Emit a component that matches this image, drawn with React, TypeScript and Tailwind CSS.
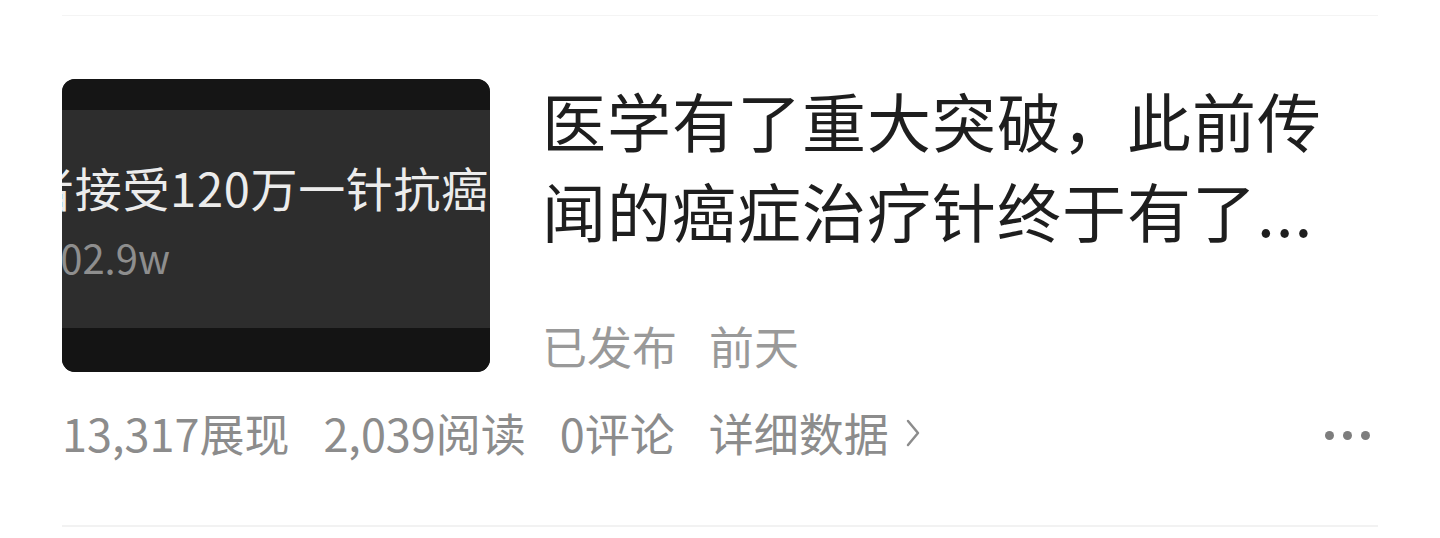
import React from 'react';

const cjk = { fontFamily: '"Noto Sans CJK SC", "Noto Sans", sans-serif' };

const Thumbnail: React.FC = () => (
  <div className="flex h-[293px] w-[428px] shrink-0 flex-col overflow-hidden rounded-[13px] bg-[#2d2d2d]">
    <div className="h-[31px] bg-[#151515]" />
    <div className="flex flex-1 flex-col overflow-hidden">
      <div className="mt-[50px] ml-[-35px] whitespace-nowrap text-[47px] leading-[54px] tracking-[0.7px] text-[#ececec]">
        者接受120万一针抗癌
      </div>
      <div className="mt-[20px] ml-[-24px] whitespace-nowrap text-[40px] leading-[46px] text-[#8e8e8e]">
        102.9w
      </div>
    </div>
    <div className="h-[44px] bg-[#141414]" />
  </div>
);

const App: React.FC = () => {
  const stats = ['13,317展现', '2,039阅读', '0评论'];

  return (
    <div className="h-[538px] w-[1440px] overflow-hidden bg-white px-[62px] pt-[15px]" style={cjk}>
      <div className="border-t border-[#f4f4f4]" />

      <div className="mt-[63px] flex">
        <Thumbnail />
        <div className="ml-[52px] flex flex-col">
          <h1 className="-mt-[5px] w-[820px] text-[64px] font-normal leading-[90px] tracking-[1px] text-[#1e1e1e]">
            医学有了重大突破，此前传
            <br />
            闻的癌症治疗针终于有了...
          </h1>
          <div className="mt-[67px] flex gap-[32px] text-[45px] leading-[50px] text-[#999999]">
            <span>已发布</span>
            <span>前天</span>
          </div>
        </div>
      </div>

      <div className="mt-[36px] flex items-center justify-between">
        <div className="flex items-center gap-[34px] text-[45px] leading-[50px] text-[#8c8c8c]">
          {stats.map(s => (
            <span key={s}>{s}</span>
          ))}
          <span className="flex items-center gap-[16px]">
            详细数据
            <svg width="16" height="30" viewBox="0 0 16 30" fill="none">
              <path d="M3 3 L13 15 L3 27" stroke="#8c8c8c" strokeWidth="2.5" strokeLinecap="round" strokeLinejoin="round" />
            </svg>
          </span>
        </div>
        <div className="mt-[4px] mr-[8px] flex items-center gap-[9px]">
          <span className="h-[9px] w-[9px] rounded-full bg-[#7d7d7d]" />
          <span className="h-[9px] w-[9px] rounded-full bg-[#7d7d7d]" />
          <span className="h-[9px] w-[9px] rounded-full bg-[#7d7d7d]" />
        </div>
      </div>

      <div className="mt-[67px] border-t-2 border-[#f2f2f2]" />
    </div>
  );
};

export default App;
